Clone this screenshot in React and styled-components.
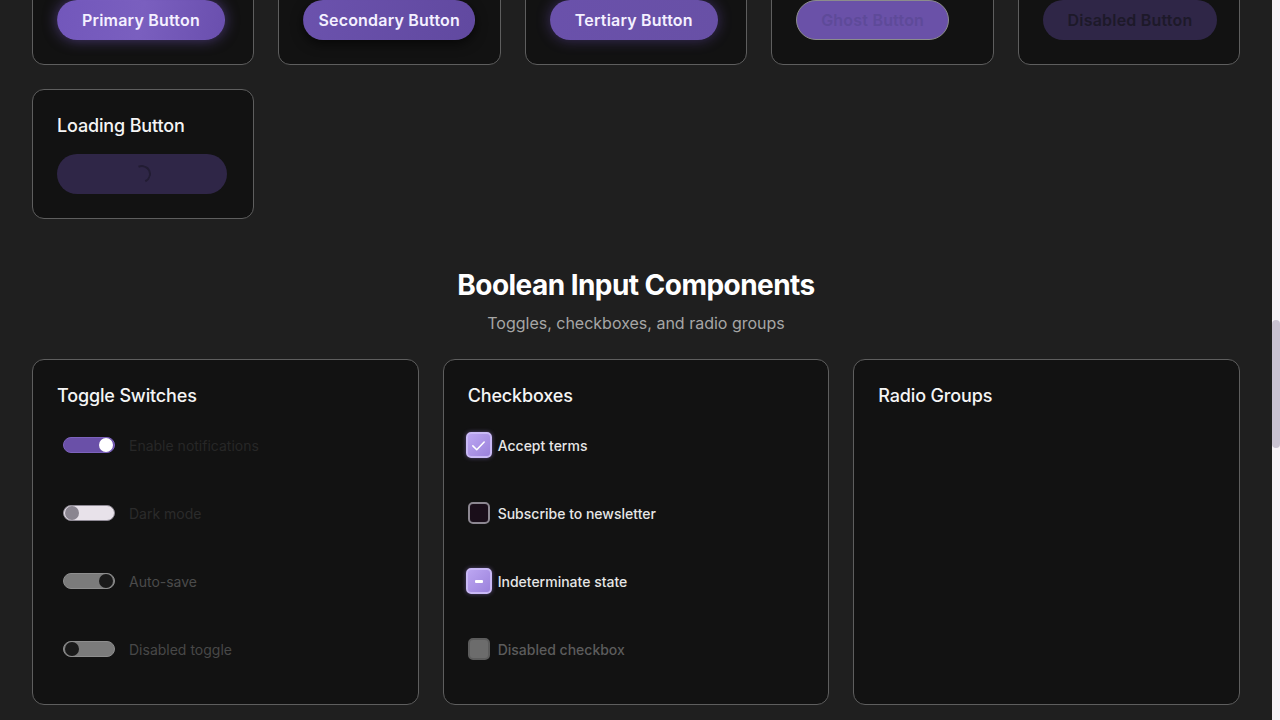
import { useLayoutEffect, useRef, useState } from 'react';
import styled, { createGlobalStyle } from 'styled-components';

const GlobalStyle = createGlobalStyle`
  html, body { margin: 0; padding: 0; background: #1f1f1f; overflow: hidden; }
  body { font-family: Inter, "Noto Sans", sans-serif; color: #f2f2f2; }
  * { box-sizing: border-box; }
`;

const Shell = styled.div`
  display: flex;
  height: 100vh;
`;

const Scroller = styled.div`
  flex: 1;
  min-width: 0;
  overflow-y: scroll;
  scrollbar-width: none;
  background: #1f1f1f;
  &::-webkit-scrollbar { display: none; }
`;

const Rail = styled.div`
  width: 8px;
  flex-shrink: 0;
  background: #f7f2f8;
  position: relative;
`;

const Thumb = styled.div`
  position: absolute;
  left: 0;
  right: 0;
  border-radius: 4px;
  background: #c9c2d2;
`;

const Page = styled.main`
  padding: 0 32px 64px;
  min-height: 4050px;
`;

const Hero = styled.header`
  padding: 80px 0 40px;
  text-align: center;
`;

const HeroTitle = styled.h1`
  margin: 0 0 12px;
  font-size: 44px;
  font-weight: 800;
`;

const Section = styled.section`
  margin-top: 48px;
  min-height: ${p => p.$minHeight || 0}px;
`;

const SectionTitle = styled.h2`
  margin: 0;
  text-align: center;
  font-size: 28px;
  line-height: 36px;
  font-weight: 700;
  color: #ffffff;
  letter-spacing: -0.55px;
`;

const SectionSub = styled.p`
  margin: 8px 0 24px;
  text-align: center;
  font-size: 16px;
  line-height: 24px;
  color: #a6a6a6;
`;

const ButtonGrid = styled.div`
  display: grid;
  grid-template-columns: repeat(5, minmax(0, 1fr));
  gap: 24px;
`;

const InputGrid = styled.div`
  display: grid;
  grid-template-columns: repeat(3, minmax(0, 1fr));
  gap: 24px;
`;

const Card = styled.article`
  background: #121212;
  border: 1px solid #5e5e5e;
  border-radius: 12px;
  padding: 24px 24px ${p => p.$bottom || 24}px;
`;

const CardTitle = styled.h3`
  margin: 0 0 16px;
  font-size: 18px;
  line-height: 24px;
  font-weight: 500;
  letter-spacing: -0.15px;
  color: #f5f5f5;
`;

const variants = {
  primary: { bg: 'linear-gradient(100deg, #7257bb, #7a5fbf 50%, #6a4fae)', color: '#f4f0ff', shadow: '0 0 14px rgba(120, 90, 200, 0.55)', border: 'transparent', pad: 24 },
  secondary: { bg: 'linear-gradient(100deg, #6b52ad, #6149a0)', color: '#f4f0ff', shadow: '0 4px 12px rgba(0, 0, 0, 0.6)', border: 'transparent', pad: 14 },
  tertiary: { bg: 'linear-gradient(100deg, #6a51ab, #6850a6)', color: '#f4f0ff', shadow: '0 0 14px rgba(110, 80, 190, 0.45)', border: 'transparent', pad: 24 },
  ghost: { bg: '#6a51a8', color: '#5e4a99', shadow: 'none', border: '#8c8c8c', pad: 24 },
  disabled: { bg: '#2f2647', color: '#1d1929', shadow: 'none', border: 'transparent', pad: 24 },
};

const Button = styled.button`
  display: inline-flex;
  align-items: center;
  justify-content: center;
  height: 40px;
  padding: 0 ${p => variants[p.$variant].pad}px;
  border-radius: 20px;
  border: 1px solid ${p => variants[p.$variant].border};
  background: ${p => variants[p.$variant].bg};
  color: ${p => variants[p.$variant].color};
  box-shadow: ${p => variants[p.$variant].shadow};
  font-family: Inter, sans-serif;
  font-size: 16px;
  font-weight: 600;
  letter-spacing: 0.2px;
  white-space: nowrap;
`;

const LoadingButton = styled(Button)`
  width: 170px;
`;

const Spinner = styled.span`
  width: 18px;
  height: 18px;
  border-radius: 50%;
  border: 2px solid #221c33;
  border-left-color: transparent;
  border-bottom-color: transparent;
  transform: rotate(20deg);
`;

const ItemList = styled.ul`
  list-style: none;
  margin: -1px 0 0;
  padding: 0;
  display: flex;
  flex-direction: column;
  gap: 24px;
`;

const Item = styled.li`
  height: 44px;
  display: flex;
  align-items: center;
  gap: ${p => p.$gap}px;
`;

const toggleStyles = {
  notify: { track: '#6a50a8', border: '#7d63bd', knob: '#ffffff', on: true, label: '#272727' },
  dark: { track: '#e8e2ea', border: '#8f8a95', knob: '#8a8590', on: false, label: '#2b2b2b' },
  autosave: { track: '#7b7b7b', border: '#8e8e8e', knob: '#1a1a1a', on: true, label: '#4b4b4b' },
  disabled: { track: '#7b7b7b', border: '#8e8e8e', knob: '#1a1a1a', on: false, label: '#484848' },
};

const Track = styled.span`
  margin-left: 6px;
  width: 52px;
  height: 16px;
  border-radius: 8px;
  background: ${p => toggleStyles[p.$kind].track};
  border: 1px solid ${p => toggleStyles[p.$kind].border};
  display: flex;
  align-items: center;
  justify-content: ${p => (toggleStyles[p.$kind].on ? 'flex-end' : 'flex-start')};
  padding: 0 1px;
`;

const Knob = styled.span`
  width: 14px;
  height: 14px;
  border-radius: 50%;
  background: ${p => toggleStyles[p.$kind].knob};
`;

const Label = styled.span`
  font-size: 14px;
  font-weight: ${p => p.$weight || 400};
  color: ${p => p.$color};
`;

const boxStyles = {
  checked: { size: 26, bg: 'linear-gradient(135deg, #bca6f2, #9b82dc)', border: '#c9b9f6', glow: '0 0 4px rgba(170, 140, 240, 0.45)' },
  unchecked: { size: 22, bg: '#1a0e1a', border: '#8c8791', glow: 'none' },
  indeterminate: { size: 26, bg: 'linear-gradient(135deg, #bca6f2, #9b82dc)', border: '#c9b9f6', glow: '0 0 4px rgba(170, 140, 240, 0.45)' },
  disabled: { size: 22, bg: '#6c6c6c', border: '#5c5c5c', glow: 'none' },
};

const Box = styled.span`
  width: ${p => boxStyles[p.$kind].size}px;
  height: ${p => boxStyles[p.$kind].size}px;
  margin: 0 ${p => (22 - boxStyles[p.$kind].size) / 2}px;
  border-radius: 5px;
  border: 2px solid ${p => boxStyles[p.$kind].border};
  background: ${p => boxStyles[p.$kind].bg};
  box-shadow: ${p => boxStyles[p.$kind].glow};
  display: flex;
  align-items: center;
  justify-content: center;
  flex-shrink: 0;
`;

const Dash = styled.span`
  width: 8px;
  height: 3px;
  border-radius: 1px;
  background: #ffffff;
`;

const Swatches = styled.div`
  display: grid;
  grid-template-columns: repeat(6, 1fr);
  gap: 24px;
`;

const Swatch = styled.div`
  height: 120px;
  border-radius: 12px;
  background: ${p => p.$color};
`;

const toggles = [
  { kind: 'notify', label: 'Enable notifications' },
  { kind: 'dark', label: 'Dark mode' },
  { kind: 'autosave', label: 'Auto-save' },
  { kind: 'disabled', label: 'Disabled toggle' },
];

const checks = [
  { kind: 'checked', label: 'Accept terms', color: '#e6e6e6' },
  { kind: 'unchecked', label: 'Subscribe to newsletter', color: '#e6e6e6' },
  { kind: 'indeterminate', label: 'Indeterminate state', color: '#e6e6e6' },
  { kind: 'disabled', label: 'Disabled checkbox', color: '#5c5c5c' },
];

const buttons = [
  { title: 'Primary Button', variant: 'primary' },
  { title: 'Secondary Button', variant: 'secondary' },
  { title: 'Tertiary Button', variant: 'tertiary' },
  { title: 'Ghost Button', variant: 'ghost' },
  { title: 'Disabled Button', variant: 'disabled' },
];

function App() {
  const scroller = useRef(null);
  const grid = useRef(null);
  const [thumb, setThumb] = useState({ top: 0, height: 0 });

  useLayoutEffect(() => {
    const s = scroller.current;
    const top = grid.current.getBoundingClientRect().top - s.getBoundingClientRect().top + s.scrollTop;
    s.scrollTop = top + 65;
    const view = s.clientHeight;
    const height = (view * view) / s.scrollHeight;
    setThumb({ top: (s.scrollTop / (s.scrollHeight - view)) * (view - height), height });
  }, []);

  return (
    <Shell>
      <GlobalStyle />
      <Scroller ref={scroller}>
        <Page>
          <Hero>
            <HeroTitle>Component Library</HeroTitle>
            <SectionSub>A showcase of interactive UI components</SectionSub>
          </Hero>

          <Section $minHeight={620}>
            <SectionTitle>Color Tokens</SectionTitle>
            <SectionSub>Brand, surface and feedback colours</SectionSub>
            <Swatches>
              {['#6a50a8', '#8a70c8', '#bca6f2', '#121212', '#1f1f1f', '#5e5e5e'].map(c => (
                <Swatch key={c} $color={c} />
              ))}
            </Swatches>
          </Section>

          <Section $minHeight={645}>
            <SectionTitle>Typography</SectionTitle>
            <SectionSub>Headings, body text and labels</SectionSub>
          </Section>

          <Section>
            <SectionTitle>Button Components</SectionTitle>
            <SectionSub>Variants, states and loading</SectionSub>
            <ButtonGrid ref={grid}>
              {buttons.map(b => (
                <Card key={b.variant}>
                  <CardTitle>{b.title.replace(' Button', '')}</CardTitle>
                  <Button $variant={b.variant}>{b.title}</Button>
                </Card>
              ))}
              <Card>
                <CardTitle>Loading Button</CardTitle>
                <LoadingButton $variant="disabled" aria-busy="true">
                  <Spinner />
                </LoadingButton>
              </Card>
            </ButtonGrid>
          </Section>

          <Section>
            <SectionTitle>Boolean Input Components</SectionTitle>
            <SectionSub>Toggles, checkboxes, and radio groups</SectionSub>
            <InputGrid>
              <Card $bottom={33}>
                <CardTitle>Toggle Switches</CardTitle>
                <ItemList>
                  {toggles.map(t => (
                    <Item key={t.kind} $gap={14}>
                      <Track $kind={t.kind}>
                        <Knob $kind={t.kind} />
                      </Track>
                      <Label $color={toggleStyles[t.kind].label}>{t.label}</Label>
                    </Item>
                  ))}
                </ItemList>
              </Card>
              <Card $bottom={33}>
                <CardTitle>Checkboxes</CardTitle>
                <ItemList>
                  {checks.map(c => (
                    <Item key={c.kind} $gap={8}>
                      <Box $kind={c.kind}>
                        {c.kind === 'checked' && (
                          <svg width="17" height="17" viewBox="0 0 24 24" fill="none" stroke="#ffffff" strokeWidth="2.2" strokeLinecap="round" strokeLinejoin="round">
                            <path d="M4 12.5l5.5 5.5L20 7" />
                          </svg>
                        )}
                        {c.kind === 'indeterminate' && <Dash />}
                      </Box>
                      <Label $color={c.color} $weight={500}>{c.label}</Label>
                    </Item>
                  ))}
                </ItemList>
              </Card>
              <Card $bottom={34}>
                <CardTitle>Radio Groups</CardTitle>
              </Card>
            </InputGrid>
          </Section>

          <Section $minHeight={700}>
            <SectionTitle>Text Input Components</SectionTitle>
            <SectionSub>Fields, text areas and selects</SectionSub>
          </Section>
        </Page>
      </Scroller>
      <Rail>
        <Thumb style={{ top: thumb.top, height: thumb.height }} />
      </Rail>
    </Shell>
  );
}

export default App;
